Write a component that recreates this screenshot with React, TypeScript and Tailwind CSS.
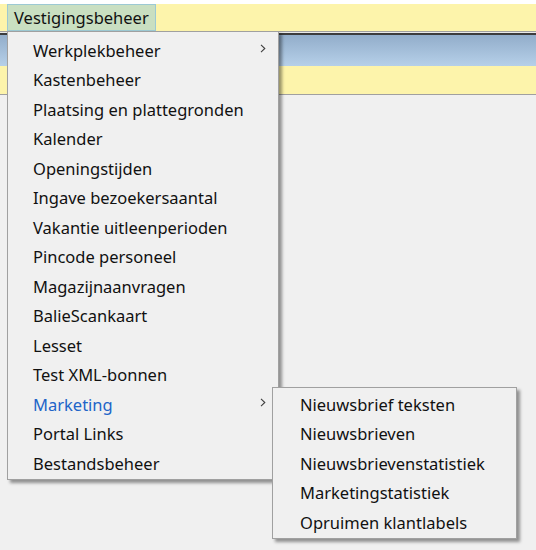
import React from "react";

const mainItems: { label: string; sub?: boolean; active?: boolean }[] = [
  { label: "Werkplekbeheer", sub: true },
  { label: "Kastenbeheer" },
  { label: "Plaatsing en plattegronden" },
  { label: "Kalender" },
  { label: "Openingstijden" },
  { label: "Ingave bezoekersaantal" },
  { label: "Vakantie uitleenperioden" },
  { label: "Pincode personeel" },
  { label: "Magazijnaanvragen" },
  { label: "BalieScankaart" },
  { label: "Lesset" },
  { label: "Test XML-bonnen" },
  { label: "Marketing", sub: true, active: true },
  { label: "Portal Links" },
  { label: "Bestandsbeheer" },
];

const subItems = [
  "Nieuwsbrief teksten",
  "Nieuwsbrieven",
  "Nieuwsbrievenstatistiek",
  "Marketingstatistiek",
  "Opruimen klantlabels",
];

function Chevron() {
  return (
    <svg width="6" height="9" viewBox="0 0 6 9" className="absolute right-[12px] top-[8px]">
      <path d="M1 0.8 L4.8 4.5 L1 8.2" fill="none" stroke="#404040" strokeWidth="1.1" />
    </svg>
  );
}

export default function App() {
  return (
    <div
      className="relative w-[536px] h-[550px] overflow-hidden bg-[#f0f0f0]"
      style={{ fontFamily: '"Noto Sans", "Open Sans", sans-serif' }}
    >
      {/* background window chrome */}
      <div className="h-[4px] bg-white" />
      <div className="h-[27px] bg-[#fdf4ab] flex items-stretch pl-[7px]">
        <div className="w-[149px] border border-[#9cc9d3] bg-[#c9dfc1] flex items-center pl-[6px] pt-[1px] text-[16.5px] text-[#111] leading-none">
          Vestigingsbeheer
        </div>
      </div>
      <div className="h-[1px] bg-[#a0a0a0]" />
      <div className="h-[1px] bg-[#e8e8e8]" />
      <div className="h-[2px] bg-[#3c3c3c]" />
      <div className="h-[31px] bg-gradient-to-b from-[#92adca] to-[#b6d0e9]" />
      <div className="h-[28px] bg-[#fdf4ab]" />
      <div className="h-[1px] bg-[#a0a0a0]" />

      {/* main dropdown */}
      <div className="absolute left-[7px] top-[31px] w-[272px] h-[449px] border border-[#a0a0a0] bg-[#f0f0f0] pt-[4px] shadow-[3px_3px_3px_rgba(0,0,0,0.4)]">
        {mainItems.map((it) => (
          <div
            key={it.label}
            className={`relative h-[29.5px] flex items-center pl-[25px] text-[16.5px] leading-none ${
              it.active ? "text-[#2064c8]" : "text-[#111]"
            }`}
          >
            {it.label}
            {it.sub && <Chevron />}
          </div>
        ))}
      </div>

      {/* submenu */}
      <div className="absolute left-[272px] top-[387px] w-[245px] h-[152px] border border-[#a0a0a0] bg-[#f0f0f0] pt-[2px] shadow-[3px_3px_3px_rgba(0,0,0,0.4)]">
        {subItems.map((s) => (
          <div key={s} className="h-[29.5px] flex items-center pl-[27px] text-[16.5px] leading-none text-[#111]">
            {s}
          </div>
        ))}
      </div>
    </div>
  );
}
